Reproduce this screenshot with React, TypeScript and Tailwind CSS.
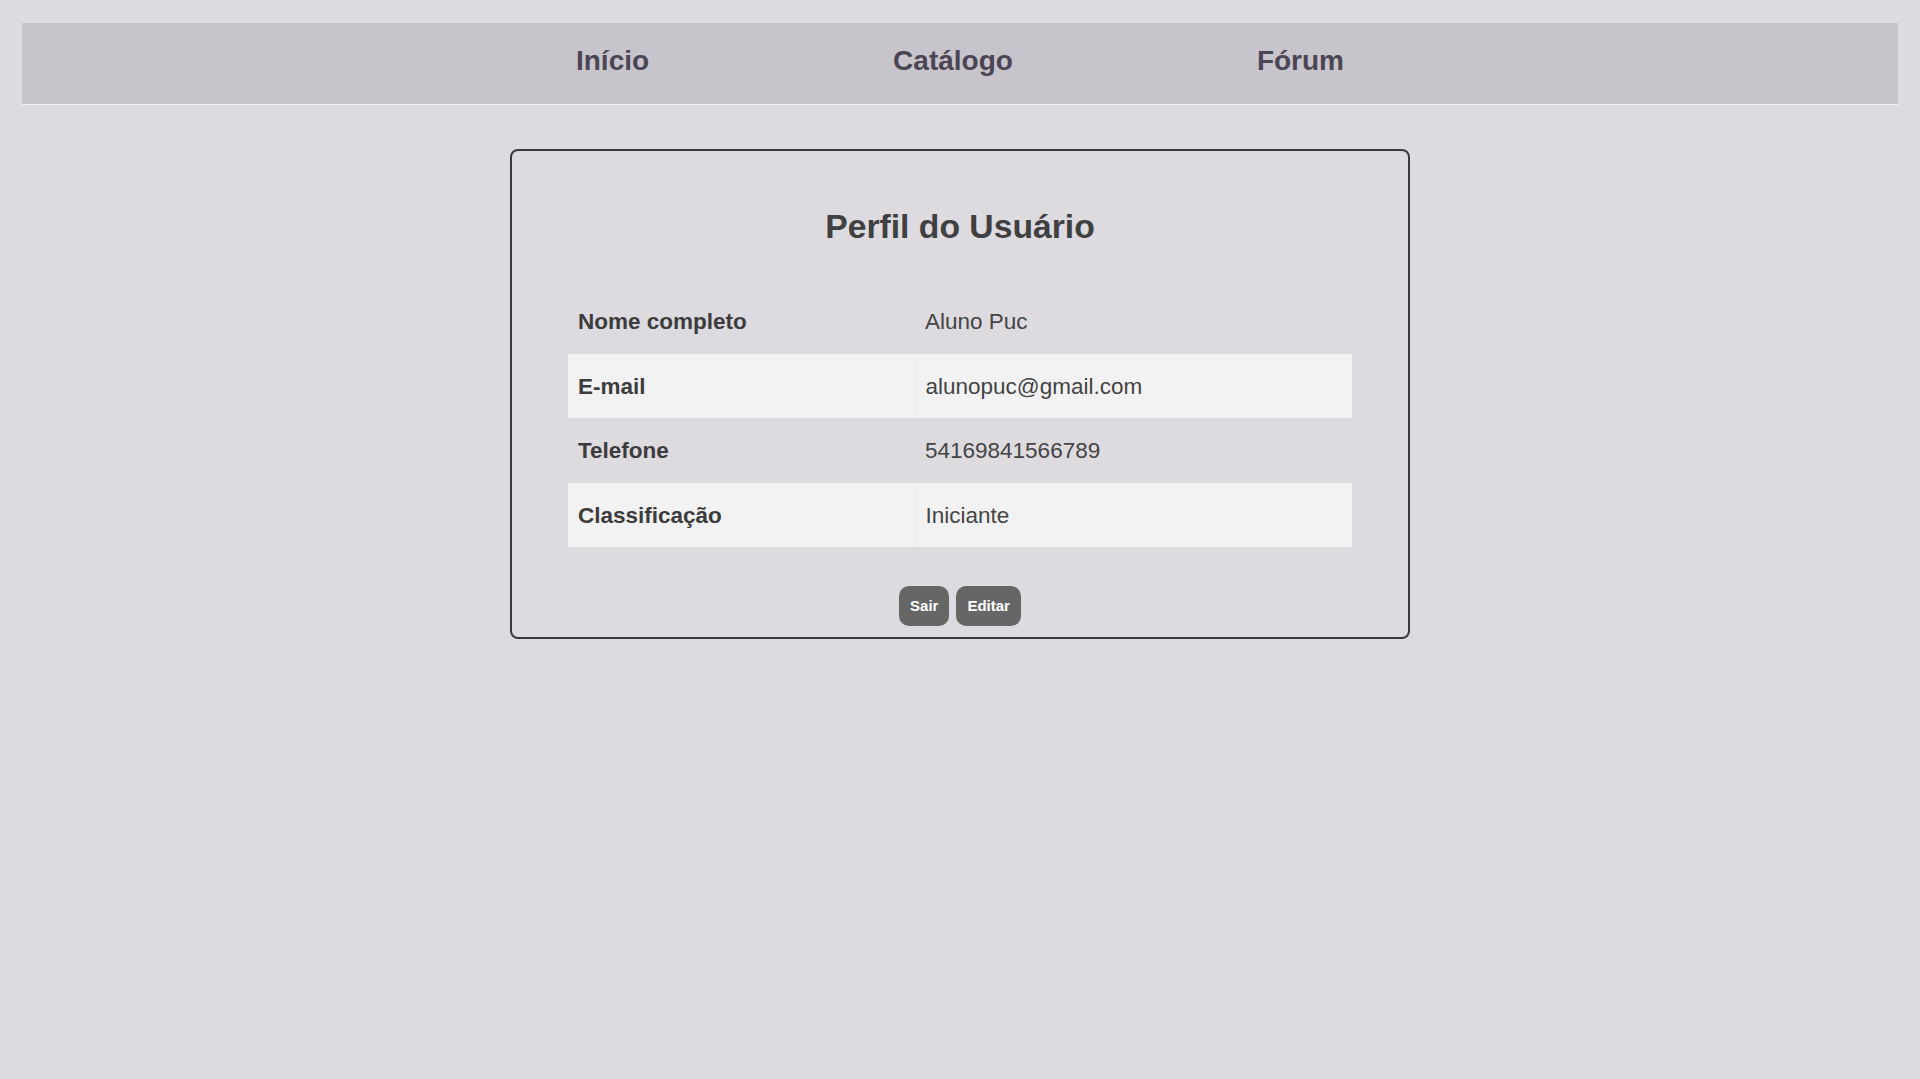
const rows = [
    { label: 'Nome completo', value: 'Aluno Puc' },
    { label: 'E-mail', value: 'alunopuc@gmail.com' },
    { label: 'Telefone', value: '54169841566789' },
    { label: 'Classificação', value: 'Iniciante' },
];

const App = () => {
    return (
        <div className="min-h-screen bg-[#dddae0] pt-[23px] font-['Liberation_Sans',Arial,sans-serif]">
            <nav className="mx-[22px] flex h-[82px] items-center justify-center gap-[244px] border-b border-[#f4f3f5] bg-[#c8c4cb] pb-[5px]">
                <a href="#" className="text-[28px] font-bold text-[#4b4554]">Início</a>
                <a href="#" className="text-[28px] font-bold text-[#4b4554]">Catálogo</a>
                <a href="#" className="text-[28px] font-bold text-[#4b4554]">Fórum</a>
            </nav>

            <div className="mx-auto mt-[44px] w-[900px] rounded-[8px] border-2 border-[#3a3a3a] px-[56px] pt-[56px] pb-[11px]">
                <h2 className="mb-[43px] text-center text-[33.7px] font-bold leading-[39px] text-[#404040]">
                    Perfil do Usuário
                </h2>

                <table className="w-full border-collapse">
                    <tbody>
                        {rows.map((row, i) => (
                            <tr key={row.label} className={i % 2 === 1 ? 'bg-[#f2f2f2]' : ''}>
                                <td className="w-[348px] px-[10px] pt-[21px] pb-[19px] text-[22.5px] font-bold leading-[24.5px] text-[#3c3c3c]">
                                    {row.label}
                                </td>
                                <td
                                    className={
                                        i % 2 === 1
                                            ? 'border-l border-[#ececec] px-[9px] pt-[21px] pb-[19px] text-[22.5px] leading-[24.5px] text-[#444]'
                                            : 'px-[9px] pt-[21px] pb-[19px] text-[22.5px] leading-[24.5px] text-[#444]'
                                    }
                                >
                                    {row.value}
                                </td>
                            </tr>
                        ))}
                    </tbody>
                </table>

                <div className="mt-[39px] flex justify-center gap-[7px]">
                    <button className="h-[40px] rounded-[10px] bg-[#666] px-[11px] text-[15px] font-bold text-white">
                        Sair
                    </button>
                    <button className="h-[40px] rounded-[10px] bg-[#666] px-[11px] text-[15px] font-bold text-white">
                        Editar
                    </button>
                </div>
            </div>
        </div>
    );
};

export default App;
